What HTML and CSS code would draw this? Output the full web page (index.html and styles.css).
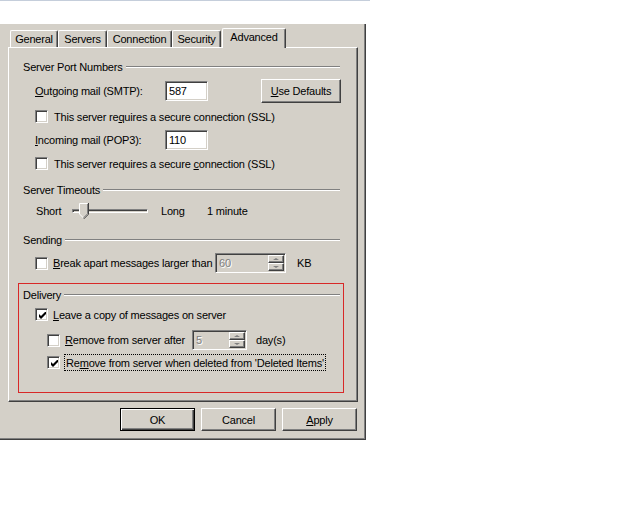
FILE: index.html
```html
<!DOCTYPE html>
<html>
<head>
<meta charset="utf-8">
<title>Advanced</title>
<link rel="stylesheet" href="styles.css">
</head>
<body>
<div class="topline"></div>
<div class="dialog">
  <div class="tabs">
    <div class="tab t-gen">General</div>
    <div class="tab t-srv">Servers</div>
    <div class="tab t-con">Connection</div>
    <div class="tab t-sec">Security</div>
    <div class="tab t-adv sel">Advanced</div>
  </div>
  <div class="panel">
    <div class="hdr h-ports"><span>Server Port Numbers</span><i class="rule"></i></div>
    <div class="row r-out">
      <span class="lbl port-lbl"><u>O</u>utgoing mail (SMTP):</span>
      <span class="edit">587</span>
      <span class="btn defaults"><u>U</u>se Defaults</span>
    </div>
    <div class="row r-ssl1">
      <span class="cb"></span>
      <span class="cbl">This server re<u>q</u>uires a secure connection (SSL)</span>
    </div>
    <div class="row r-in">
      <span class="lbl port-lbl"><u>I</u>ncoming mail (POP3):</span>
      <span class="edit">110</span>
    </div>
    <div class="row r-ssl2">
      <span class="cb"></span>
      <span class="cbl">This server requires a secure <u>c</u>onnection (SSL)</span>
    </div>

    <div class="hdr h-time"><span>Server Timeouts</span><i class="rule"></i></div>
    <div class="row r-slider">
      <span class="s-short">Short</span>
      <span class="track">
        <svg class="thumb" width="10" height="16" viewBox="0 0 10 16">
          <polygon points="0.5,0.5 8.5,0.5 8.5,11 4.5,15 0.5,11" fill="#d4d0c8"/>
          <path d="M0.5 11 V0.5 H8.5" stroke="#fff" fill="none"/>
          <path d="M0.5 11 L4.5 15" stroke="#fff" fill="none"/>
          <path d="M9.5 0 V11.2 L4.8 15.9" stroke="#404040" fill="none"/>
          <path d="M8.5 1 V10.8 L4.5 14.8" stroke="#808080" fill="none"/>
        </svg>
      </span>
      <span class="s-long">Long</span>
      <span>1 minute</span>
    </div>

    <div class="hdr h-send"><span>Sending</span><i class="rule"></i></div>
    <div class="row r-break">
      <span class="cb"></span>
      <span class="cbl break-lbl"><u>B</u>reak apart messages larger than</span>
      <span class="spin spin-kb"><span class="val">60</span><span class="arrows"><b class="up"></b><b class="dn"></b></span></span>
      <span class="unit-kb">KB</span>
    </div>

    <div class="redbox">
      <div class="hdr"><span>Delivery</span><i class="rule"></i></div>
      <div class="row r-leave">
        <span class="cb"><svg width="7" height="7" viewBox="0 0 7 7"><polygon points="0,2 2,4 7,-1 7,2 2,7 0,5" fill="#000"/></svg></span>
        <span class="cbl"><u>L</u>eave a copy of messages on server</span>
      </div>
      <div class="row r-after">
        <span class="cb"></span>
        <span class="cbl after-lbl"><u>R</u>emove from server after</span>
        <span class="spin spin-days"><span class="val">5</span><span class="arrows"><b class="up"></b><b class="dn"></b></span></span>
        <span class="unit-days">day(s)</span>
      </div>
      <div class="row r-deleted">
        <span class="cb"><svg width="7" height="7" viewBox="0 0 7 7"><polygon points="0,2 2,4 7,-1 7,2 2,7 0,5" fill="#000"/></svg></span>
        <span class="focus">Re<u>m</u>ove from server when deleted from 'Deleted Items'</span>
      </div>
    </div>
  </div>
  <div class="buttons">
    <span class="btn def">OK</span>
    <span class="btn">Cancel</span>
    <span class="btn"><u>A</u>pply</span>
  </div>
</div>
</body>
</html>
```

FILE: styles.css
```css
* { box-sizing: border-box; }
html, body { margin: 0; background: #fff; }
body {
  font-family: "Liberation Sans", Arial, sans-serif;
  font-size: 11px;
  letter-spacing: -0.2px;
  color: #000;
}
u { text-decoration: underline; text-underline-offset: 1px; }

.topline { width: 370px; height: 24px; border-top: 1px solid #c5cedb; }

.dialog {
  width: 366px;
  height: 416px;
  background: #d4d0c8;
  border-right: 1px solid #404040;
  border-bottom: 1px solid #404040;
  box-shadow: inset -1px -1px #808080;
  padding: 4px 0 0 8px;
  display: flex;
  flex-direction: column;
}

/* tabs */
.tabs {
  display: flex;
  align-items: flex-end;
  height: 20px;
  margin-bottom: -1px;
  padding-left: 2px;
}
.tab {
  height: 18px;
  border: 1px solid #fff;
  border-bottom: 0;
  border-right-color: #404040;
  border-radius: 2px 2px 0 0;
  box-shadow: inset -1px 0 #808080;
  display: flex;
  align-items: center;
  justify-content: center;
  padding-bottom: 1px;
  background: #d4d0c8;
}
.t-gen { width: 48px; }
.t-srv { width: 49px; }
.t-con { width: 65px; }
.t-sec { width: 49px; }
.t-adv { width: 64px; margin-left: 1px; }
.tab.sel {
  height: 20px;
  position: relative;
  z-index: 1;
  padding-bottom: 3px;
}

/* panel */
.panel {
  position: relative;
  width: 350px;
  height: 355px;
  border: 1px solid #fff;
  border-right-color: #404040;
  border-bottom-color: #404040;
  box-shadow: inset -1px -1px #808080;
  padding: 0 17px 0 14px;
  display: flex;
  flex-direction: column;
  background: #d4d0c8;
}

.hdr { display: flex; align-items: center; height: 14px; flex: none; }
.rule {
  flex: 1;
  height: 2px;
  margin-left: 3px;
  border-top: 1px solid #808080;
  border-bottom: 1px solid #fff;
}
.h-ports { margin-top: 12px; }
.h-time { margin-top: 13px; }
.h-send { margin-top: 15px; }

.row { display: flex; align-items: center; flex: none; }
.r-out { margin-top: 5px; height: 24px; padding-left: 12px; }
.r-ssl1 { margin-top: 7px; height: 13px; padding-left: 12px; }
.r-in { margin-top: 7px; height: 20px; padding-left: 12px; }
.r-ssl2 { margin-top: 7px; height: 13px; padding-left: 12px; }
.r-slider { margin-top: 7px; height: 14px; padding-left: 13px; }
.r-break { margin-top: 6px; height: 20px; padding-left: 12px; }
.r-leave { margin-top: 6px; height: 13px; padding-left: 12px; }
.r-after { margin-top: 9px; height: 20px; padding-left: 24px; }
.r-deleted { margin-top: 4px; height: 17px; padding-left: 24px; }

.port-lbl { width: 130px; }

.edit {
  width: 43px;
  height: 20px;
  background: #fff;
  border: 1px solid;
  border-color: #808080 #fff #fff #808080;
  box-shadow: inset 1px 1px #404040, inset -1px -1px #d4d0c8;
  padding: 0 3px;
  line-height: 18px;
}

.btn {
  width: 75px;
  height: 23px;
  display: flex;
  align-items: center;
  justify-content: center;
  border: 1px solid;
  border-color: #fff #404040 #404040 #fff;
  box-shadow: inset -1px -1px #808080;
  background: #d4d0c8;
}
.btn.def {
  border-color: #000;
  box-shadow: inset 1px 1px #fff, inset -1px -1px #404040, inset -2px -2px #808080;
}
.defaults {
  width: 80px;
  height: 24px;
  margin-left: auto;
  margin-right: -1px;
}

/* checkbox */
.cb {
  flex: none;
  width: 13px;
  height: 13px;
  background: #fff;
  border: 1px solid;
  border-color: #808080 #fff #fff #808080;
  box-shadow: inset 1px 1px #404040, inset -1px -1px #d4d0c8;
  display: flex;
  align-items: center;
  justify-content: center;
}
.cb svg { display: block; margin: 1px 0 0 1px; }
.cbl { margin-left: 5px; }
.r-ssl1 .cbl, .r-ssl2 .cbl { margin-left: 6px; }

/* slider */
.s-short { width: 36px; }
.track {
  position: relative;
  width: 76px;
  height: 4px;
  border: 1px solid;
  border-color: #808080 #fff #fff #808080;
  box-shadow: inset 1px 1px #404040;
}
.thumb { position: absolute; left: 6px; top: -7px; display: block; }
.s-long { width: 46px; margin-left: 13px; }

/* spin */
.spin {
  display: flex;
  height: 20px;
  border: 1px solid;
  border-color: #808080 #fff #fff #808080;
  box-shadow: inset 1px 1px #404040, inset -1px -1px #d4d0c8;
  padding: 1px;
  color: #808080;
}
.spin .val {
  flex: 1;
  padding-left: 2px;
  line-height: 16px;
  text-shadow: 1px 1px #fff;
}
.arrows { width: 16px; display: flex; flex-direction: column; }
.arrows b {
  flex: 1;
  border: 1px solid;
  border-color: #fff #404040 #404040 #fff;
  box-shadow: inset -1px -1px #808080;
  display: flex;
  align-items: center;
  justify-content: center;
}
.arrows b::after {
  content: "";
  border-left: 3px solid transparent;
  border-right: 3px solid transparent;
  border-bottom: 2px solid #808080;
}
.arrows b.dn::after { border-bottom: 0; border-top: 2px solid #808080; }

.break-lbl { width: 162px; }
.spin-kb { width: 71px; }
.unit-kb { margin-left: 11px; }
.after-lbl { width: 127px; }
.spin-days { width: 55px; }
.unit-days { margin-left: 9px; }

.focus {
  height: 17px;
  margin-left: 4px;
  border: 1px dotted #000;
  padding: 0 1px;
  display: flex;
  align-items: center;
  white-space: nowrap;
}

/* annotation box */
.redbox {
  flex: none;
  margin: 10px -4px 0 -5px;
  border: 1px solid #d82828;
  padding: 4px 3px 21px 4px;
}

.buttons {
  display: flex;
  justify-content: flex-end;
  gap: 6px;
  margin-top: 6px;
  padding-right: 8px;
}
```
